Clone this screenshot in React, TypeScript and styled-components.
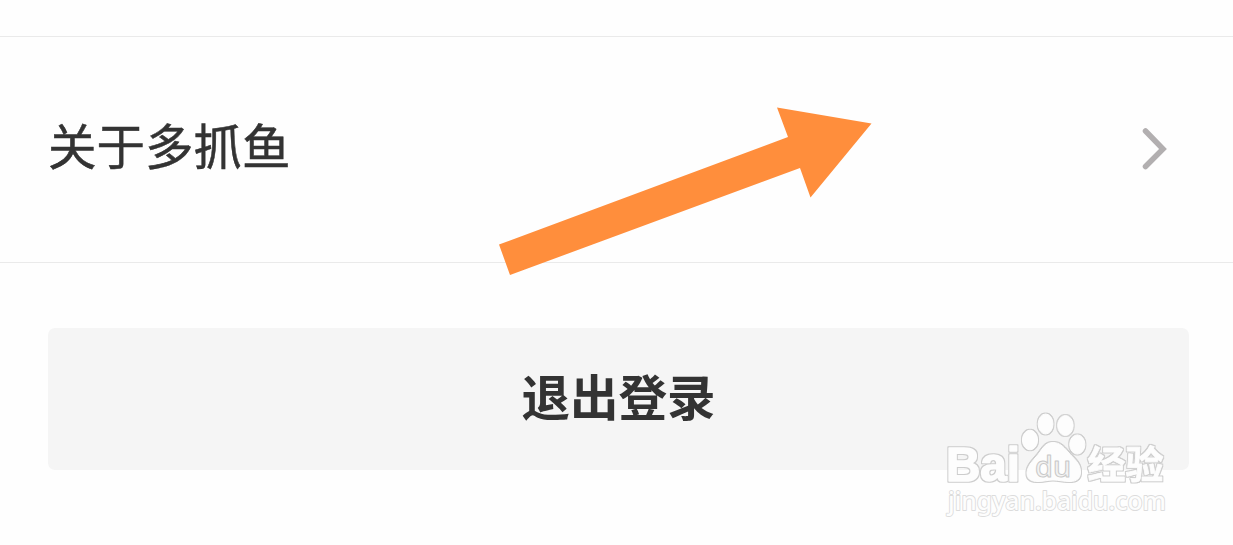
import * as React from 'react';
import styled, { createGlobalStyle } from 'styled-components';

const GlobalStyle = createGlobalStyle`
  * {
    box-sizing: border-box;
  }

  body {
    margin: 0;
    overflow: hidden;
    background-color: #fefefe;
    font-family: 'Noto Sans CJK SC', sans-serif;
    color: #333;
  }
`;

const Page = styled.main`
  position: relative;
  height: 545px;
  padding-top: 36px;
  overflow: hidden;
`;

const SettingRow = styled.a`
  display: flex;
  align-items: center;
  justify-content: space-between;
  height: 227px;
  padding: 0 65px 0 48px;
  border-top: 1px solid #eaeaea;
  border-bottom: 1px solid #eaeaea;
`;

const SettingLabel = styled.span`
  font-size: 48.5px;
  line-height: 70px;
  padding-bottom: 12px;
  -webkit-text-stroke: 0.5px #333;
`;

const Chevron = styled.svg`
  width: 28px;
  height: 44px;
`;

const ButtonArea = styled.div`
  padding: 65px 44px 0 48px;
`;

const LogoutButton = styled.button`
  display: flex;
  align-items: center;
  justify-content: center;
  width: 100%;
  height: 142px;
  padding: 0 0 9px;
  border: 0;
  border-radius: 7px;
  background-color: #f5f5f5;
  color: #333;
  font-family: inherit;
  font-size: 48.5px;
  font-weight: 700;
  line-height: 70px;
`;

const PointerArrow = styled.svg`
  position: absolute;
  top: 100px;
  left: 490px;
  width: 390px;
  height: 180px;
`;

const WatermarkBox = styled.svg`
  position: absolute;
  top: 405px;
  left: 940px;
  width: 235px;
  height: 120px;

  text {
    font-family: 'Noto Sans', sans-serif;
    stroke-linejoin: round;
  }
`;

const Solid = styled.g`
  fill: #fdfdfd;
  stroke: #fdfdfd;
  stroke-width: 1px;

  .bai {
    font-family: 'Liberation Sans', sans-serif;
    font-weight: 700;
    stroke-width: 1.6px;
  }

  .jingyan {
    font-family: 'Noto Sans CJK SC', sans-serif;
    font-weight: 700;
    stroke-width: 0.8px;
  }
`;

const Du = styled.text`
  fill: #f3f3f3;
  stroke: #c8c8c8;
  stroke-width: 1px;
  font-weight: 500;
`;

const Site = styled.text`
  fill: #fdfdfd;
  stroke: #dcdcdc;
  stroke-width: 1.8px;
  paint-order: stroke;
  font-weight: 500;
`;

const Watermark = () => (
  <WatermarkBox viewBox="0 0 235 120">
    <defs>
      <filter id="rim" filterUnits="userSpaceOnUse" x="0" y="0" width="235" height="120" colorInterpolationFilters="sRGB">
        <feMorphology in="SourceAlpha" operator="dilate" radius="1" result="wide" />
        <feFlood floodColor="#cdcdcd" />
        <feComposite in2="wide" operator="in" result="edge" />
        <feGaussianBlur in="edge" stdDeviation="0.3" result="soft" />
        <feMerge>
          <feMergeNode in="soft" />
          <feMergeNode in="SourceGraphic" />
        </feMerge>
      </filter>
    </defs>
    <Solid filter="url(#rim)">
      <text className="bai" x="6" y="76" fontSize="48.500" textLength="74" lengthAdjust="spacingAndGlyphs">
        Bai
      </text>
      <ellipse cx="90" cy="35" rx="7.6" ry="9.8" />
      <ellipse cx="105.6" cy="19" rx="7.400" ry="10" />
      <ellipse cx="125.4" cy="20.5" rx="7.8" ry="10" />
      <ellipse cx="137.3" cy="39.5" rx="7.6" ry="9.6" />
      <path d="M113 37.500C107 37.500 104 41 100 47C95 54 88 59 87 67C86.500 74 91 76.500 98 76.500C104 76.500 107 75 113 75C119 75 123 76.500 130 76.500C137 76.500 140.500 73 140.500 67C140.500 58 134 54 128 47C123 41 119 37.500 113 37.500Z" />
      <text className="jingyan" x="147.500" y="73" fontSize="38" textLength="76" lengthAdjust="spacingAndGlyphs">
        经验
      </text>
    </Solid>
    <Du x="95" y="71.500" fontSize="28" textLength="36" lengthAdjust="spacingAndGlyphs">
      du
    </Du>
    <Site x="8" y="105" fontSize="25" textLength="218" lengthAdjust="spacingAndGlyphs">
      jingyan.baidu.com
    </Site>
  </WatermarkBox>
);

export default function App() {
  return (
    <>
      <GlobalStyle />
      <Page>
        <SettingRow>
          <SettingLabel>关于多抓鱼</SettingLabel>
          <Chevron viewBox="0 0 28 44" fill="none">
            <path
              d="M5.500 3L23 21L5.500 38.500"
              stroke="#b2afb0"
              strokeWidth="5.500"
              strokeLinecap="round"
            />
          </Chevron>
        </SettingRow>
        <ButtonArea>
          <LogoutButton>退出登录</LogoutButton>
        </ButtonArea>
        <PointerArrow viewBox="490 100 390 180">
          <path
            d="M499 244.500L788 137L777 107.500L871.500 123.500L810.500 197.500L800 168L510 275Z"
            fill="#ff8e3c"
          />
        </PointerArrow>
        <Watermark />
      </Page>
    </>
  );
}
